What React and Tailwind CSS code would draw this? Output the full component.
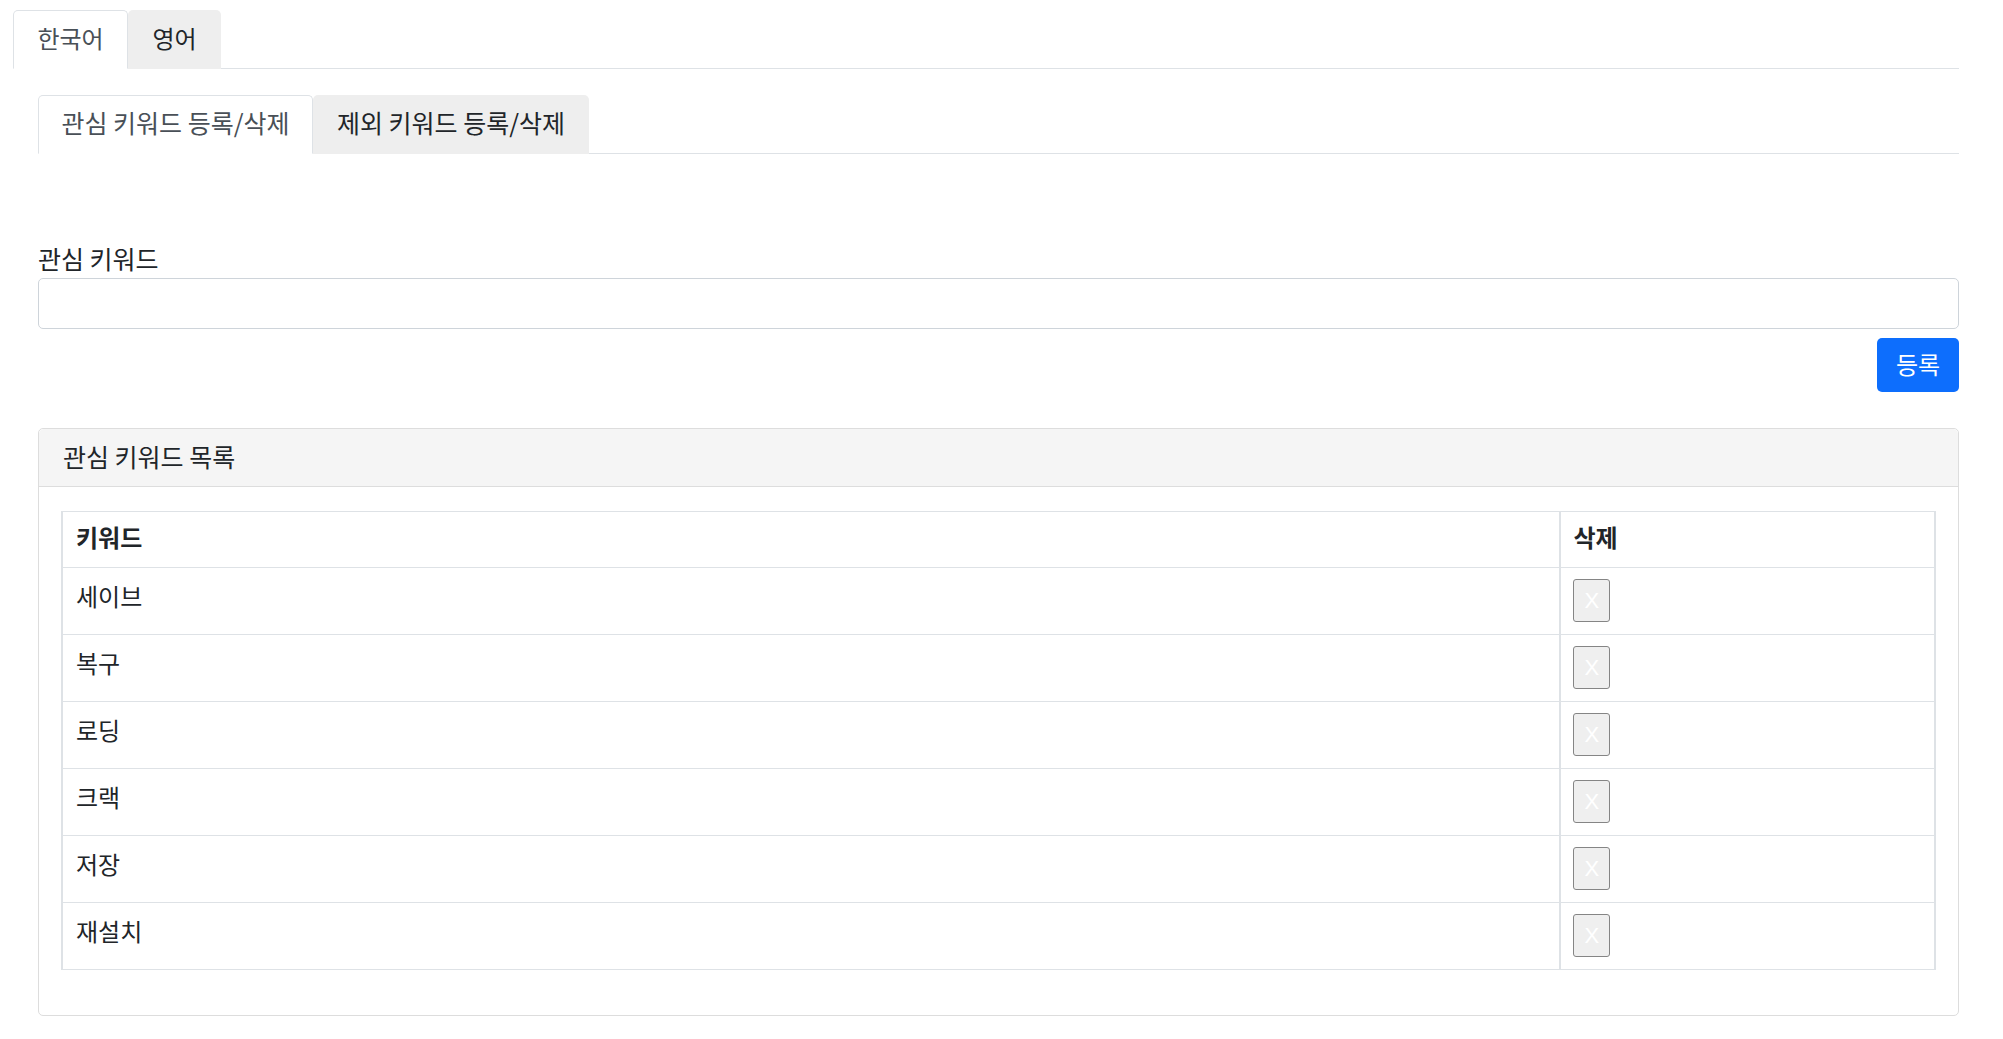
import React from 'react';

const keywords = ['세이브', '복구', '로딩', '크랙', '저장', '재설치'];

function Tabs({ items, active, widths, textSize }) {
    return (
        <div className="flex border-b border-[#dee2e6]">
            {items.map((label, i) => (
                <div
                    key={label}
                    className={
                        i === active
                            ? 'flex h-[59px] -mb-px items-center justify-center rounded-t-[5px] border border-[#dee2e6] border-b-white bg-white pb-[4px] text-[#495057] ' + widths[i] + ' ' + textSize
                            : 'flex h-[59px] -mb-px items-center justify-center rounded-t-[5px] border border-transparent bg-[#eeeeee] pb-[4px] text-[#212529] ' + widths[i] + ' ' + textSize
                    }
                >
                    {label}
                </div>
            ))}
        </div>
    );
}

export default function App() {
    return (
        <div className="min-h-screen bg-white pl-[13px] pr-[44px] pt-[10px] font-['Noto_Sans_CJK_KR','Liberation_Sans',sans-serif] text-[#212529]">
            <Tabs items={['한국어', '영어']} active={0} widths={['w-[115px]', 'w-[93px]']} textSize="text-[24px]" />

            <div className="pl-[25px]">
                <div className="mt-[26px]">
                    <Tabs
                        items={['관심 키워드 등록/삭제', '제외 키워드 등록/삭제']}
                        active={0}
                        widths={['w-[275px]', 'w-[276px]']}
                        textSize="text-[25px]"
                    />
                </div>

                <div className="mt-[93px] flex flex-col">
                    <label className="h-[30px] text-[25px] leading-[22px]">관심 키워드</label>
                    <input
                        type="text"
                        className="mt-px h-[51px] w-full rounded-[5px] border border-[#ced4da] px-3 outline-none"
                    />
                    <button className="mt-[9px] flex h-[54px] w-[82px] items-center justify-center self-end rounded-[5px] bg-[#0d6efd] pb-[2px] text-[24px] text-white">
                        등록
                    </button>
                </div>

                <div className="mt-[36px] rounded-[5px] border border-[#dddddd]">
                    <div className="flex h-[58px] items-center rounded-t-[5px] border-b border-[#dddddd] bg-[#f5f5f5] px-[24px] pb-[2px] text-[25px]">
                        관심 키워드 목록
                    </div>
                    <div className="px-[22px] pb-[45px] pt-[24px]">
                        <table className="w-full border-collapse">
                            <thead>
                                <tr className="border-y border-[#dee2e6]">
                                    <th className="h-[56px] w-4/5 border-x-2 border-[#dee2e6] pl-[13px] text-left text-[24px] font-bold leading-[30px]">
                                        <div className="pb-[6px]">키워드</div>
                                    </th>
                                    <th className="h-[56px] border-x-2 border-[#dee2e6] pl-[12px] text-left text-[24px] font-bold leading-[30px]">
                                        <div className="pb-[6px]">삭제</div>
                                    </th>
                                </tr>
                            </thead>
                            <tbody>
                                {keywords.map((k) => (
                                    <tr key={k} className="border-b border-[#dee2e6]">
                                        <td className="border-x-2 border-[#dee2e6] pb-[12px] pl-[13px] pt-[11px] align-top text-[24px] leading-[33px]">
                                            {k}
                                        </td>
                                        <td className="border-x-2 border-[#dee2e6] pb-[12px] pl-[12px] pt-[11px] align-top">
                                            <button className="flex h-[43px] w-[37px] items-center justify-center rounded-[3px] border border-[#858585] bg-[#efefef] font-['Liberation_Sans',sans-serif] text-[22px] text-white">
                                                X
                                            </button>
                                        </td>
                                    </tr>
                                ))}
                            </tbody>
                        </table>
                    </div>
                </div>
            </div>
        </div>
    );
}
